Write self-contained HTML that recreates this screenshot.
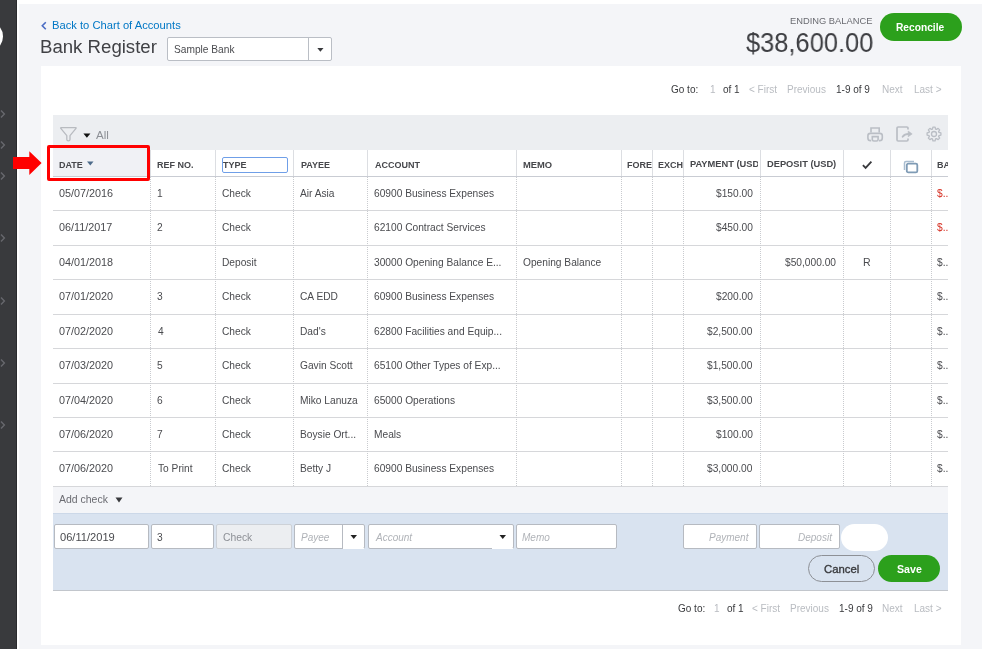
<!DOCTYPE html><html><head><meta charset="utf-8"><style>
*{box-sizing:border-box;margin:0;padding:0}
html,body{width:982px;height:649px;overflow:hidden;background:#fff;font-family:"Liberation Sans",sans-serif;color:#393a3d}
.a{position:absolute}
.t{position:absolute;white-space:nowrap;line-height:1;will-change:transform}
.chev{position:absolute;width:6px;height:6px;border-right:1.2px solid #75767b;border-top:1.2px solid #75767b;transform:rotate(45deg)}
.vs{position:absolute;width:1px;background:#dcdee2}
.vd{position:absolute;width:1px;background:repeating-linear-gradient(to bottom,#c9cbcf 0 1px,transparent 1px 2px)}
.hl{position:absolute;height:1px;background:#d6d7da}
.inp{position:absolute;background:#fff;border:1px solid #b6bac1;border-radius:2px;height:25px;top:524px}
</style></head><body>
<div class="a" style="left:0;top:0;width:17px;height:649px;background:#393a3d"></div>
<div class="a" style="left:16px;top:0;width:1px;height:649px;background:#2a2b2e"></div>
<div class="a" style="left:-28.9px;top:20.8px;width:31.4px;height:31.4px;border:4px solid #fff;border-radius:50%"></div>
<svg class="a" style="left:0;top:108.8px" width="6" height="10" viewBox="0 0 6 10"><path d="M1 1.4 L4.4 5 L1 8.6" fill="none" stroke="#67686d" stroke-width="1.4"/></svg>
<svg class="a" style="left:0;top:140.3px" width="6" height="10" viewBox="0 0 6 10"><path d="M1 1.4 L4.4 5 L1 8.6" fill="none" stroke="#67686d" stroke-width="1.4"/></svg>
<svg class="a" style="left:0;top:171.2px" width="6" height="10" viewBox="0 0 6 10"><path d="M1 1.4 L4.4 5 L1 8.6" fill="none" stroke="#67686d" stroke-width="1.4"/></svg>
<svg class="a" style="left:0;top:233px" width="6" height="10" viewBox="0 0 6 10"><path d="M1 1.4 L4.4 5 L1 8.6" fill="none" stroke="#67686d" stroke-width="1.4"/></svg>
<svg class="a" style="left:0;top:295.5px" width="6" height="10" viewBox="0 0 6 10"><path d="M1 1.4 L4.4 5 L1 8.6" fill="none" stroke="#67686d" stroke-width="1.4"/></svg>
<svg class="a" style="left:0;top:357.8px" width="6" height="10" viewBox="0 0 6 10"><path d="M1 1.4 L4.4 5 L1 8.6" fill="none" stroke="#67686d" stroke-width="1.4"/></svg>
<svg class="a" style="left:0;top:420px" width="6" height="10" viewBox="0 0 6 10"><path d="M1 1.4 L4.4 5 L1 8.6" fill="none" stroke="#67686d" stroke-width="1.4"/></svg>
<div class="a" style="left:19px;top:4px;width:963px;height:645px;background:#f4f5f8"></div>
<svg class="a" style="left:40px;top:21px" width="8" height="10" viewBox="0 0 8 10"><path d="M5.8 1.3 L2.3 4.8 L5.8 8.3" fill="none" stroke="#4a6cc4" stroke-width="1.6"/></svg>
<div class="t" style="left:51.88px;top:20.32px;font-size:11.2px;color:#0077c5;">Back to Chart of Accounts</div>
<div class="t" style="left:39.77px;top:37.53px;font-size:18.63px;color:#404145;">Bank Register</div>
<div class="a" style="left:167px;top:36.5px;width:165px;height:24.5px;background:#fff;border:1px solid #babec5;border-radius:2px"></div>
<div class="a" style="left:308px;top:37px;width:1px;height:23.5px;background:#babec5"></div>
<div class="t" style="left:174.44px;top:44.87px;font-size:10.19px;color:#4a4b4f;">Sample Bank</div>
<svg class="a" style="left:317px;top:48px" width="7" height="4" viewBox="0 0 7 4"><path d="M0.3 0 L6.5 0 L3.4 3.8 Z" fill="#393a3d"/></svg>
<div class="t" style="left:789.83px;top:16.7px;font-size:9.33px;color:#6b6c72;">ENDING BALANCE</div>
<div class="t" style="left:746.15px;top:29.44px;font-size:27.95px;color:#3d3e42;transform:scaleX(0.9109);transform-origin:0 0">$38,600.00</div>
<div class="a" style="left:880.3px;top:12.8px;width:81.6px;height:27.8px;border-radius:14px;background:#2ca01c;box-shadow:0 0 0 0.6px #f4faf3"></div>
<div class="t" style="left:896.13px;top:23.07px;font-size:10.2px;color:#fff;font-weight:bold;">Reconcile</div>
<div class="a" style="left:41px;top:66px;width:920px;height:579px;background:#fff"></div>
<div class="t" style="left:671.4px;top:85.03px;font-size:10.0px;color:#393a3d;">Go to:</div>
<div class="t" style="left:710.14px;top:85.03px;font-size:10.0px;color:#b9bcc1;">1</div>
<div class="t" style="left:722.58px;top:85.03px;font-size:10.0px;color:#393a3d;">of 1</div>
<div class="t" style="left:749.31px;top:85.03px;font-size:10.0px;color:#b9bcc1;">&lt; First</div>
<div class="t" style="left:787.48px;top:85.03px;font-size:10.0px;color:#b9bcc1;">Previous</div>
<div class="t" style="left:835.94px;top:85.03px;font-size:10.0px;color:#393a3d;">1-9 of 9</div>
<div class="t" style="left:882.38px;top:85.03px;font-size:10.0px;color:#b9bcc1;">Next</div>
<div class="t" style="left:913.88px;top:85.03px;font-size:10.0px;color:#b9bcc1;">Last &gt;</div>
<div class="t" style="left:677.8px;top:603.93px;font-size:10.0px;color:#393a3d;">Go to:</div>
<div class="t" style="left:714.24px;top:603.93px;font-size:10.0px;color:#b9bcc1;">1</div>
<div class="t" style="left:727.08px;top:603.93px;font-size:10.0px;color:#393a3d;">of 1</div>
<div class="t" style="left:751.71px;top:603.93px;font-size:10.0px;color:#b9bcc1;">&lt; First</div>
<div class="t" style="left:790.38px;top:603.93px;font-size:10.0px;color:#b9bcc1;">Previous</div>
<div class="t" style="left:838.74px;top:603.93px;font-size:10.0px;color:#393a3d;">1-9 of 9</div>
<div class="t" style="left:882.38px;top:603.93px;font-size:10.0px;color:#b9bcc1;">Next</div>
<div class="t" style="left:913.88px;top:603.93px;font-size:10.0px;color:#b9bcc1;">Last &gt;</div>
<div class="a" style="left:53px;top:115px;width:895px;height:35px;background:#eceef1"></div>
<svg class="a" style="left:59px;top:126px" width="19" height="17" viewBox="0 0 19 17"><path d="M2.2 1.6 H16.6 Q17.6 1.6 17 2.4 L11 9.6 V13.6 Q11 14.9 9.4 14.9 Q7.8 14.9 7.8 13.6 V9.6 L1.8 2.4 Q1.2 1.6 2.2 1.6 Z" fill="none" stroke="#b8bbc0" stroke-width="1.3" stroke-linejoin="round"/></svg>
<svg class="a" style="left:83px;top:132.6px" width="8" height="6" viewBox="0 0 8 6"><path d="M0.4 0.5 L7.4 0.5 L3.9 4.8 Z" fill="#111"/></svg>
<div class="t" style="left:95.88px;top:129.18px;font-size:11.6px;color:#8d9096;">All</div>
<svg class="a" style="left:866px;top:126px" width="18" height="16" viewBox="0 0 18 16"><path d="M5 6.6 V2 H13.2 V6.6" fill="none" stroke="#babec5" stroke-width="1.6"/><path d="M5.2 14.6 H4.6 Q1.9 14.6 1.9 11.9 V9.8 Q1.9 7.4 4.3 7.4 H13.9 Q16.3 7.4 16.3 9.8 V11.9 Q16.3 14.6 13.6 14.6 H13" fill="none" stroke="#babec5" stroke-width="1.6"/><path d="M6.3 10.6 H12.1 V13.4 Q12.1 15 10.5 15 H7.9 Q6.3 15 6.3 13.4 Z" fill="none" stroke="#babec5" stroke-width="1.6"/></svg>
<svg class="a" style="left:896px;top:126px" width="18" height="16" viewBox="0 0 18 16"><path d="M12 3.6 V2.2 Q12 1 10.8 1 H2.2 Q1 1 1 2.2 V13.8 Q1 15 2.2 15 H10.8 Q12 15 12 13.8 V12.4" fill="none" stroke="#babec5" stroke-width="1.7"/><path d="M6.6 10.8 Q8.6 7.9 12.6 7.9" fill="none" stroke="#babec5" stroke-width="1.8" stroke-linecap="round"/><path d="M12.2 5.1 L16.2 7.9 L12.2 10.7 Z" fill="#babec5" stroke="#babec5" stroke-width="0.6" stroke-linejoin="round"/></svg>
<svg class="a" style="left:926px;top:126px" width="16" height="16" viewBox="0 0 16 16"><path d="M6.48 3.03 L6.90 1.09 L9.10 1.09 L9.52 3.03 L10.44 3.41 L12.11 2.34 L13.66 3.89 L12.59 5.56 L12.97 6.48 L14.91 6.90 L14.91 9.10 L12.97 9.52 L12.59 10.44 L13.66 12.11 L12.11 13.66 L10.44 12.59 L9.52 12.97 L9.10 14.91 L6.90 14.91 L6.48 12.97 L5.56 12.59 L3.89 13.66 L2.34 12.11 L3.41 10.44 L3.03 9.52 L1.09 9.10 L1.09 6.90 L3.03 6.48 L3.41 5.56 L2.34 3.89 L3.89 2.34 L5.56 3.41 Z" fill="none" stroke="#babec5" stroke-width="1.3" stroke-linejoin="round"/><circle cx="8" cy="8" r="2.5" fill="none" stroke="#babec5" stroke-width="1.3"/></svg>
<div class="a" style="left:53px;top:150px;width:895px;height:26px;background:#fff"></div>
<div class="a" style="left:53px;top:150px;width:97px;height:26px;background:#f0f1f5"></div>
<div class="hl" style="left:53px;top:176px;width:895px;background:#c9ccd3"></div>
<div class="vs" style="left:150px;top:150px;height:26px"></div>
<div class="vs" style="left:215px;top:150px;height:26px"></div>
<div class="vs" style="left:293px;top:150px;height:26px"></div>
<div class="vs" style="left:367px;top:150px;height:26px"></div>
<div class="vs" style="left:516px;top:150px;height:26px"></div>
<div class="vs" style="left:621px;top:150px;height:26px"></div>
<div class="vs" style="left:652px;top:150px;height:26px"></div>
<div class="vs" style="left:683px;top:150px;height:26px"></div>
<div class="vs" style="left:760px;top:150px;height:26px"></div>
<div class="vs" style="left:843px;top:150px;height:26px"></div>
<div class="vs" style="left:890px;top:150px;height:26px"></div>
<div class="vs" style="left:931px;top:150px;height:26px"></div>
<div class="t" style="left:58.61px;top:160.68px;font-size:9.0px;color:#46474b;font-weight:bold;">DATE</div>
<div class="t" style="left:156.81px;top:160.68px;font-size:9.0px;color:#46474b;font-weight:bold;">REF NO.</div>
<div class="t" style="left:223.0px;top:160.68px;font-size:9.0px;color:#46474b;font-weight:bold;">TYPE</div>
<div class="t" style="left:300.51px;top:160.68px;font-size:9.0px;color:#46474b;font-weight:bold;">PAYEE</div>
<div class="t" style="left:374.58px;top:160.68px;font-size:9.0px;color:#46474b;font-weight:bold;">ACCOUNT</div>
<div class="t" style="left:523.08px;top:160.34px;font-size:9.4px;color:#46474b;font-weight:bold;">MEMO</div>
<div class="a" style="left:621px;top:150px;width:31px;height:26px;overflow:hidden"><div class="t" style="left:6.309999999999945px;top:10.680000000000007px;font-size:9.0px;font-weight:bold;color:#46474b">FORE</div></div>
<div class="a" style="left:652px;top:150px;width:31px;height:26px;overflow:hidden"><div class="t" style="left:6.210000000000036px;top:10.680000000000007px;font-size:9.0px;font-weight:bold;color:#46474b">EXCH</div></div>
<div class="a" style="left:683px;top:150px;width:75px;height:26px;overflow:hidden"><div class="t" style="left:6.690000000000055px;top:10.430000000000007px;font-size:9.3px;font-weight:bold;color:#46474b">PAYMENT (USD)</div></div>
<div class="a" style="left:931px;top:150px;width:17px;height:26px;overflow:hidden"><div class="t" style="left:6.409999999999968px;top:10.680000000000007px;font-size:9.0px;font-weight:bold;color:#46474b">BALANCE</div></div>
<div class="t" style="left:767.39px;top:160.43px;font-size:9.3px;color:#46474b;font-weight:bold;">DEPOSIT (USD)</div>
<svg class="a" style="left:87px;top:161px" width="7" height="5" viewBox="0 0 7 5"><path d="M0 0.5 L6.5 0.5 L3.25 4.5 Z" fill="#4d6b8a"/></svg>
<div class="a" style="left:222px;top:156.7px;width:65.6px;height:16.5px;border:1.5px solid #6f9fe8;border-radius:2px"></div>
<svg class="a" style="left:861px;top:160px" width="12" height="10" viewBox="0 0 12 10"><path d="M1.9 5.2 L4.6 7.9 L10.4 1.6" fill="none" stroke="#393a3d" stroke-width="1.8"/></svg>
<svg class="a" style="left:903px;top:160px" width="16" height="14" viewBox="0 0 16 14"><path d="M1.5 10 V3 Q1.5 1.5 3 1.5 H11" fill="none" stroke="#a9bdd0" stroke-width="1.5"/><rect x="3.8" y="3.6" width="10.5" height="8.8" rx="1.5" fill="none" stroke="#7f9bb5" stroke-width="1.8"/></svg>
<div class="t" style="left:58.88px;top:188.16px;font-size:10.8px;color:#4a4b4f;">05/07/2016</div>
<div class="t" style="left:157.02px;top:188.67px;font-size:10.2px;color:#4a4b4f;">1</div>
<div class="t" style="left:222.09px;top:188.67px;font-size:10.2px;color:#4a4b4f;">Check</div>
<div class="t" style="left:300.48px;top:188.67px;font-size:10.2px;color:#4a4b4f;">Air Asia</div>
<div class="t" style="left:374.09px;top:188.67px;font-size:10.2px;color:#4a4b4f;">60900 Business Expenses</div>
<div class="t" style="left:715.71px;top:188.67px;font-size:10.2px;color:#4a4b4f;">$150.00</div>
<div class="t" style="left:937.0px;top:188.67px;font-size:10.2px;color:#d52b1e;">$...</div>
<div class="hl" style="left:53px;top:210px;width:895px"></div>
<div class="t" style="left:58.88px;top:222.16px;font-size:10.8px;color:#4a4b4f;">06/11/2017</div>
<div class="t" style="left:157.29px;top:222.67px;font-size:10.2px;color:#4a4b4f;">2</div>
<div class="t" style="left:222.09px;top:222.67px;font-size:10.2px;color:#4a4b4f;">Check</div>
<div class="t" style="left:374.09px;top:222.67px;font-size:10.2px;color:#4a4b4f;">62100 Contract Services</div>
<div class="t" style="left:715.71px;top:222.67px;font-size:10.2px;color:#4a4b4f;">$450.00</div>
<div class="t" style="left:937.0px;top:222.67px;font-size:10.2px;color:#d52b1e;">$...</div>
<div class="hl" style="left:53px;top:245px;width:895px"></div>
<div class="t" style="left:58.88px;top:257.16px;font-size:10.8px;color:#4a4b4f;">04/01/2018</div>
<div class="t" style="left:221.76px;top:257.67px;font-size:10.2px;color:#4a4b4f;">Deposit</div>
<div class="t" style="left:374.21px;top:257.67px;font-size:10.2px;color:#4a4b4f;">30000 Opening Balance E...</div>
<div class="t" style="left:523.02px;top:257.67px;font-size:10.2px;color:#4a4b4f;">Opening Balance</div>
<div class="t" style="left:784.94px;top:257.67px;font-size:10.2px;color:#4a4b4f;">$50,000.00</div>
<div class="t" style="left:863.43px;top:257.33px;font-size:10.6px;color:#4a4b4f;">R</div>
<div class="t" style="left:937.0px;top:257.67px;font-size:10.2px;color:#4a4b4f;">$...</div>
<div class="hl" style="left:53px;top:279px;width:895px"></div>
<div class="t" style="left:58.88px;top:291.16px;font-size:10.8px;color:#4a4b4f;">07/01/2020</div>
<div class="t" style="left:157.41px;top:291.67px;font-size:10.2px;color:#4a4b4f;">3</div>
<div class="t" style="left:222.09px;top:291.67px;font-size:10.2px;color:#4a4b4f;">Check</div>
<div class="t" style="left:299.99px;top:291.67px;font-size:10.2px;color:#4a4b4f;">CA EDD</div>
<div class="t" style="left:374.09px;top:291.67px;font-size:10.2px;color:#4a4b4f;">60900 Business Expenses</div>
<div class="t" style="left:715.71px;top:291.67px;font-size:10.2px;color:#4a4b4f;">$200.00</div>
<div class="t" style="left:937.0px;top:291.67px;font-size:10.2px;color:#4a4b4f;">$...</div>
<div class="hl" style="left:53px;top:314px;width:895px"></div>
<div class="t" style="left:58.88px;top:326.16px;font-size:10.8px;color:#4a4b4f;">07/02/2020</div>
<div class="t" style="left:157.58px;top:326.67px;font-size:10.2px;color:#4a4b4f;">4</div>
<div class="t" style="left:222.09px;top:326.67px;font-size:10.2px;color:#4a4b4f;">Check</div>
<div class="t" style="left:299.66px;top:326.67px;font-size:10.2px;color:#4a4b4f;">Dad's</div>
<div class="t" style="left:374.09px;top:326.67px;font-size:10.2px;color:#4a4b4f;">62800 Facilities and Equip...</div>
<div class="t" style="left:707.21px;top:326.67px;font-size:10.2px;color:#4a4b4f;">$2,500.00</div>
<div class="t" style="left:937.0px;top:326.67px;font-size:10.2px;color:#4a4b4f;">$...</div>
<div class="hl" style="left:53px;top:348px;width:895px"></div>
<div class="t" style="left:58.88px;top:360.16px;font-size:10.8px;color:#4a4b4f;">07/03/2020</div>
<div class="t" style="left:157.39px;top:360.67px;font-size:10.2px;color:#4a4b4f;">5</div>
<div class="t" style="left:222.09px;top:360.67px;font-size:10.2px;color:#4a4b4f;">Check</div>
<div class="t" style="left:299.99px;top:360.67px;font-size:10.2px;color:#4a4b4f;">Gavin Scott</div>
<div class="t" style="left:374.09px;top:360.67px;font-size:10.2px;color:#4a4b4f;">65100 Other Types of Exp...</div>
<div class="t" style="left:707.21px;top:360.67px;font-size:10.2px;color:#4a4b4f;">$1,500.00</div>
<div class="t" style="left:937.0px;top:360.67px;font-size:10.2px;color:#4a4b4f;">$...</div>
<div class="hl" style="left:53px;top:383px;width:895px"></div>
<div class="t" style="left:58.88px;top:395.16px;font-size:10.8px;color:#4a4b4f;">07/04/2020</div>
<div class="t" style="left:157.29px;top:395.67px;font-size:10.2px;color:#4a4b4f;">6</div>
<div class="t" style="left:222.09px;top:395.67px;font-size:10.2px;color:#4a4b4f;">Check</div>
<div class="t" style="left:299.66px;top:395.67px;font-size:10.2px;color:#4a4b4f;">Miko Lanuza</div>
<div class="t" style="left:374.09px;top:395.67px;font-size:10.2px;color:#4a4b4f;">65000 Operations</div>
<div class="t" style="left:707.21px;top:395.67px;font-size:10.2px;color:#4a4b4f;">$3,500.00</div>
<div class="t" style="left:937.0px;top:395.67px;font-size:10.2px;color:#4a4b4f;">$...</div>
<div class="hl" style="left:53px;top:417px;width:895px"></div>
<div class="t" style="left:58.88px;top:429.16px;font-size:10.8px;color:#4a4b4f;">07/06/2020</div>
<div class="t" style="left:157.28px;top:429.67px;font-size:10.2px;color:#4a4b4f;">7</div>
<div class="t" style="left:222.09px;top:429.67px;font-size:10.2px;color:#4a4b4f;">Check</div>
<div class="t" style="left:299.66px;top:429.67px;font-size:10.2px;color:#4a4b4f;">Boysie Ort...</div>
<div class="t" style="left:373.76px;top:429.67px;font-size:10.2px;color:#4a4b4f;">Meals</div>
<div class="t" style="left:715.71px;top:429.67px;font-size:10.2px;color:#4a4b4f;">$100.00</div>
<div class="t" style="left:937.0px;top:429.67px;font-size:10.2px;color:#4a4b4f;">$...</div>
<div class="hl" style="left:53px;top:451px;width:895px"></div>
<div class="t" style="left:58.88px;top:463.16px;font-size:10.8px;color:#4a4b4f;">07/06/2020</div>
<div class="t" style="left:157.58px;top:463.67px;font-size:10.2px;color:#4a4b4f;">To Print</div>
<div class="t" style="left:222.09px;top:463.67px;font-size:10.2px;color:#4a4b4f;">Check</div>
<div class="t" style="left:299.66px;top:463.67px;font-size:10.2px;color:#4a4b4f;">Betty J</div>
<div class="t" style="left:374.09px;top:463.67px;font-size:10.2px;color:#4a4b4f;">60900 Business Expenses</div>
<div class="t" style="left:707.21px;top:463.67px;font-size:10.2px;color:#4a4b4f;">$3,000.00</div>
<div class="t" style="left:937.0px;top:463.67px;font-size:10.2px;color:#4a4b4f;">$...</div>
<div class="hl" style="left:53px;top:486px;width:895px"></div>
<div class="vd" style="left:150px;top:177px;height:309px"></div>
<div class="vd" style="left:215px;top:177px;height:309px"></div>
<div class="vd" style="left:293px;top:177px;height:309px"></div>
<div class="vd" style="left:367px;top:177px;height:309px"></div>
<div class="vd" style="left:516px;top:177px;height:309px"></div>
<div class="vd" style="left:621px;top:177px;height:309px"></div>
<div class="vd" style="left:652px;top:177px;height:309px"></div>
<div class="vd" style="left:683px;top:177px;height:309px"></div>
<div class="vd" style="left:760px;top:177px;height:309px"></div>
<div class="vd" style="left:843px;top:177px;height:309px"></div>
<div class="vd" style="left:890px;top:177px;height:309px"></div>
<div class="vd" style="left:931px;top:177px;height:309px"></div>
<div class="a" style="left:948px;top:100px;width:13px;height:500px;background:#fff"></div>
<div class="a" style="left:53px;top:487px;width:895px;height:26px;background:#f4f5f8"></div>
<div class="t" style="left:58.88px;top:495.13px;font-size:10.47px;color:#6b6c72;">Add check</div>
<svg class="a" style="left:115px;top:497px" width="8" height="6" viewBox="0 0 8 6"><path d="M0.5 0.5 L7.5 0.5 L4 5.5 Z" fill="#393a3d"/></svg>
<div class="a" style="left:53px;top:513px;width:895px;height:78px;background:#d9e3f0;border-top:1px solid #ccd8e8;border-bottom:1.5px solid #c2c6cc"></div>
<div class="inp" style="left:54px;width:95px;background:#fff"></div>
<div class="inp" style="left:151px;width:63px;background:#fff"></div>
<div class="inp" style="left:215.5px;width:76.80000000000001px;background:#eceef1;border-color:#cdd1d7"></div>
<div class="inp" style="left:294.3px;width:71.0px;background:#fff"></div>
<div class="inp" style="left:367.8px;width:145.99999999999994px;background:#fff"></div>
<div class="inp" style="left:516.2px;width:101.19999999999993px;background:#fff"></div>
<div class="inp" style="left:682.5px;width:74.5px;background:#fff"></div>
<div class="inp" style="left:759px;width:81px;background:#fff"></div>
<div class="a" style="left:342px;top:525px;width:1px;height:23px;background:#b6bac1"></div>
<div class="a" style="left:491.5px;top:548px;width:21px;height:1.2px;background:#fff"></div>
<div class="a" style="left:343px;top:548px;width:21px;height:1.2px;background:#fff"></div>
<div class="a" style="left:841px;top:524px;width:47px;height:27px;background:#fff;border-radius:14px"></div>
<div class="t" style="left:60.37px;top:532.38px;font-size:11.12px;color:#4a4b4f;">06/11/2019</div>
<div class="t" style="left:157.11px;top:533.17px;font-size:10.2px;color:#4a4b4f;">3</div>
<div class="t" style="left:222.58px;top:533.05px;font-size:10.34px;color:#8d9096;">Check</div>
<div class="t" style="left:300.8px;top:532.74px;font-size:10.0px;color:#b0b3b8;font-style:italic;">Payee</div>
<div class="t" style="left:375.5px;top:532.74px;font-size:10.0px;color:#b0b3b8;font-style:italic;">Account</div>
<div class="t" style="left:522.3px;top:532.74px;font-size:10.0px;color:#b0b3b8;font-style:italic;">Memo</div>
<div class="t" style="left:709.49px;top:532.74px;font-size:10.0px;color:#b0b3b8;font-style:italic;">Payment</div>
<div class="t" style="left:797.94px;top:532.74px;font-size:10.0px;color:#b0b3b8;font-style:italic;">Deposit</div>
<svg class="a" style="left:350px;top:534px" width="8" height="6" viewBox="0 0 8 6"><path d="M0.5 1 L7 1 L3.75 5 Z" fill="#222"/></svg>
<svg class="a" style="left:499px;top:534px" width="8" height="6" viewBox="0 0 8 6"><path d="M0.5 1 L7 1 L3.75 5 Z" fill="#222"/></svg>
<div class="a" style="left:807.8px;top:555px;width:67.7px;height:27px;border:1.2px solid #8d9096;border-radius:14px"></div>
<div class="t" style="left:824.43px;top:563.9px;font-size:11.34px;color:#393a3d;-webkit-text-stroke:0.35px #393a3d;">Cancel</div>
<div class="a" style="left:877.6px;top:555px;width:62.2px;height:27px;border-radius:14px;background:#2ca01c"></div>
<div class="t" style="left:896.5px;top:564.49px;font-size:10.65px;color:#fff;font-weight:bold;">Save</div>
<div class="a" style="left:47px;top:145px;width:103px;height:36px;border:3px solid #f00;border-radius:2px"></div>
<svg class="a" style="left:13px;top:150px" width="30" height="26" viewBox="0 0 30 26"><path d="M0 7.1 H16.3 V1.2 L28.6 12.9 L16.3 25 V18.9 H0 Z" fill="#f00"/></svg>
</body></html>
